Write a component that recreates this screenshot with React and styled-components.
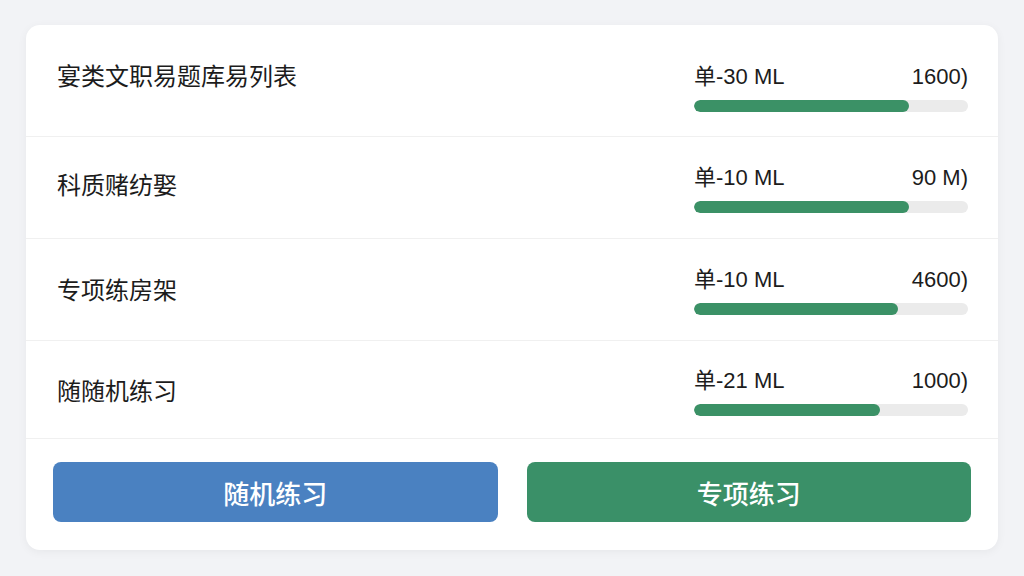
import React from 'react'
import styled, { createGlobalStyle } from 'styled-components'

const GlobalStyle = createGlobalStyle`
  html, body {
    margin: 0;
    padding: 0;
    background: #f2f3f6;
    font-family: "Liberation Sans", "Noto Sans CJK SC", sans-serif;
  }
`

const Page = styled.div`
  width: 1024px;
  height: 576px;
  padding: 25px 26px 26px;
  box-sizing: border-box;
`

const Card = styled.div`
  background: #fff;
  border-radius: 14px;
  box-shadow: 0 2px 10px rgba(0, 0, 0, 0.05);
  display: flex;
  flex-direction: column;
  overflow: hidden;
`

const Row = styled.div`
  display: flex;
  align-items: center;
  justify-content: space-between;
  padding: ${p => p.pad};
  border-bottom: 1px solid #f0f0f0;
`

const Title = styled.div`
  font-size: 24px;
  line-height: 30px;
  color: #1c1c1c;
  padding-left: 31px;
  margin-top: ${p => p.shift || 0}px;
`

const Stat = styled.div`
  width: 274px;
  margin-right: 30px;
  display: flex;
  flex-direction: column;
  gap: 12px;
`

const StatLabels = styled.div`
  display: flex;
  justify-content: space-between;
  font-size: 22px;
  line-height: 22px;
  color: #1c1c1c;
`

const Track = styled.div`
  height: 12px;
  border-radius: 6px;
  background: #ebebeb;
  overflow: hidden;
`

const Fill = styled.div`
  height: 100%;
  border-radius: 6px;
  background: #3b9166;
`

const Footer = styled.div`
  display: grid;
  grid-template-columns: 1fr 1fr;
  gap: 29px;
  padding: 23px 27px 28px;
`

const Button = styled.button`
  height: 60px;
  border: none;
  border-radius: 8px;
  background: ${p => p.color};
  color: #fff;
  font-family: "Noto Sans CJK SC", sans-serif;
  font-size: 26px;
  font-weight: 500;
  cursor: pointer;
`

const rows = [
  { title: '宴类文职易题库易列表', left: '单-30 ML', right: '1600)', pct: 78.5, pad: '41px 0 24px', shift: -24 },
  { title: '科质赌纺娶', left: '单-10 ML', right: '90 M)', pct: 78.5, pad: '30px 0 25px', shift: -8 },
  { title: '专项练房架', left: '单-10 ML', right: '4600)', pct: 74.5, pad: '30px 0 25px', shift: -3 },
  { title: '随随机练习', left: '单-21 ML', right: '1000)', pct: 68, pad: '29px 0 22px', shift: -2 },
]

export default function App() {
  return (
    <Page>
      <GlobalStyle />
      <Card>
        {rows.map(r => (
          <Row key={r.title} pad={r.pad}>
            <Title shift={r.shift}>{r.title}</Title>
            <Stat>
              <StatLabels>
                <span>{r.left}</span>
                <span>{r.right}</span>
              </StatLabels>
              <Track>
                <Fill style={{ width: r.pct + '%' }} />
              </Track>
            </Stat>
          </Row>
        ))}
        <Footer>
          <Button color="#4a81c1">随机练习</Button>
          <Button color="#3a9068">专项练习</Button>
        </Footer>
      </Card>
    </Page>
  )
}
